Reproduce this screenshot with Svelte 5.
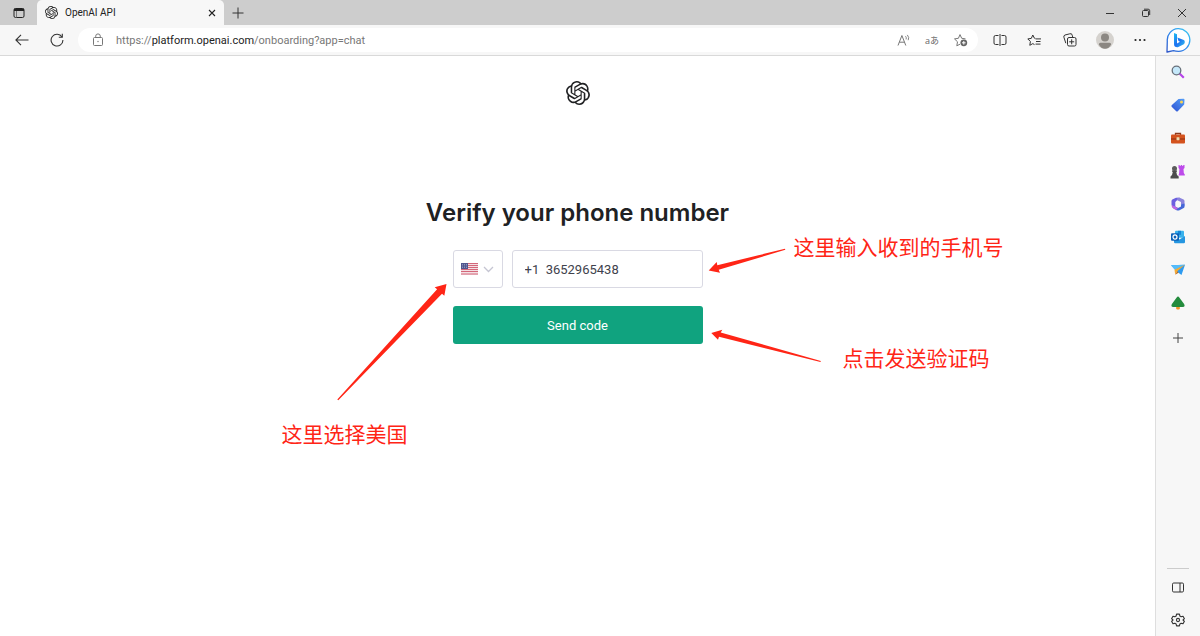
<script lang="ts">
  const logo =
    "M22.2819 9.8211a5.9847 5.9847 0 0 0-.5157-4.9108 6.0462 6.0462 0 0 0-6.5098-2.9A6.0651 6.0651 0 0 0 4.9807 4.1818a5.9847 5.9847 0 0 0-3.9977 2.9 6.0462 6.0462 0 0 0 .7427 7.0966 5.98 5.98 0 0 0 .511 4.9107 6.051 6.051 0 0 0 6.5146 2.9001A5.9847 5.9847 0 0 0 13.2599 24a6.0557 6.0557 0 0 0 5.7718-4.2058 5.9894 5.9894 0 0 0 3.9977-2.9001 6.0557 6.0557 0 0 0-.7475-7.0729zm-9.022 12.6081a4.4755 4.4755 0 0 1-2.8764-1.0408l.1419-.0804 4.7783-2.7582a.7948.7948 0 0 0 .3927-.6813v-6.7369l2.02 1.1686a.071.071 0 0 1 .038.052v5.5826a4.504 4.504 0 0 1-4.4945 4.4944zm-9.6607-4.1254a4.4708 4.4708 0 0 1-.5346-3.0137l.142.0852 4.783 2.7582a.7712.7712 0 0 0 .7806 0l5.8428-3.3685v2.3324a.0804.0804 0 0 1-.0332.0615L9.74 19.9502a4.4992 4.4992 0 0 1-6.1408-1.6464zM2.3408 7.8956a4.485 4.485 0 0 1 2.3655-1.9728V11.6a.7664.7664 0 0 0 .3879.6765l5.8144 3.3543-2.0201 1.1685a.0757.0757 0 0 1-.071 0l-4.8303-2.7865A4.504 4.504 0 0 1 2.3408 7.872zm16.5963 3.8558L13.1038 8.364 15.1192 7.2a.0757.0757 0 0 1 .071 0l4.8303 2.7913a4.4944 4.4944 0 0 1-.6765 8.1042v-5.6772a.79.79 0 0 0-.407-.667zm2.0107-3.0231l-.142-.0852-4.7735-2.7818a.7759.7759 0 0 0-.7854 0L9.409 9.2297V6.8974a.0662.0662 0 0 1 .0284-.0615l4.8303-2.7866a4.4992 4.4992 0 0 1 6.6802 4.66zM8.3065 12.863l-2.02-1.1638a.0804.0804 0 0 1-.038-.0567V6.0742a4.4992 4.4992 0 0 1 7.3757-3.4537l-.142.0805L8.704 5.459a.7948.7948 0 0 0-.3927.6813zm1.0976-2.3654l2.602-1.4998 2.6069 1.4998v2.9994l-2.5974 1.4997-2.6067-1.4997Z";

  let phone = "+1  3652965438";
  let country = "US";
</script>

<div class="browser">
  <header>
    <div class="titlebar">
      <button class="tab-menu" aria-label="Tab actions">
        <svg width="12" height="12" viewBox="0 0 12 12" fill="none" stroke="#222">
          <rect x="1" y="1.5" width="10" height="9" rx="1.5" />
          <path d="M1 2.8h10" stroke-width="2.4" />
          <path d="M3.5 4v6.5" stroke="#777" />
        </svg>
      </button>
      <div class="tab">
        <svg width="13" height="13" viewBox="0 0 24 24" fill="#222"><path d={logo} /></svg>
        <span class="tab-title">OpenAI API</span>
        <button class="tab-close" aria-label="Close tab">
          <svg width="8" height="8" viewBox="0 0 8 8" stroke="#222" stroke-width="1.1"><path d="M1 1l6 6M7 1L1 7" /></svg>
        </button>
      </div>
      <button class="new-tab" aria-label="New tab">
        <svg width="12" height="12" viewBox="0 0 12 12" stroke="#333"><path d="M6 .5v11M.5 6h11" /></svg>
      </button>
      <div class="window-controls">
        <button aria-label="Minimize">
          <svg width="10" height="10" viewBox="0 0 10 10" stroke="#333"><path d="M1 5.5h8" /></svg>
        </button>
        <button aria-label="Restore">
          <svg width="10" height="10" viewBox="0 0 10 10" fill="none" stroke="#333">
            <rect x="1.5" y="2.5" width="6" height="6" rx="1" />
            <path d="M3 1.2h4.2a1.5 1.5 0 0 1 1.5 1.5V7" />
          </svg>
        </button>
        <button aria-label="Close">
          <svg width="10" height="10" viewBox="0 0 10 10" stroke="#333"><path d="M1 1l8 8M9 1L1 9" /></svg>
        </button>
      </div>
    </div>

    <div class="toolbar">
      <button class="tool" aria-label="Back">
        <svg width="14" height="12" viewBox="0 0 14 12" fill="none" stroke="#333" stroke-width="1.1"><path d="M13.5 6H1M6 .8L.9 6 6 11.2" /></svg>
      </button>
      <button class="tool" aria-label="Refresh">
        <svg width="14" height="14" viewBox="0 0 14 14" fill="none" stroke="#333" stroke-width="1.1">
          <path d="M12 4A5.9 5.9 0 1 0 12.9 7" />
          <path d="M12.3 .8v3.5H8.8" />
        </svg>
      </button>
      <div class="address">
        <svg class="lock" width="12" height="14" viewBox="0 0 12 14" fill="none" stroke="#777">
          <rect x="1.5" y="4.5" width="9" height="8" rx="1" />
          <path d="M3.7 4.5V3.2a2.3 2.3 0 0 1 4.6 0v1.3" />
          <circle cx="6" cy="8.5" r=".7" fill="#777" stroke="none" />
        </svg>
        <span class="url">https://<b>platform.openai.com</b>/onboarding?app=chat</span>
        <button class="inner" aria-label="Read aloud">
          <svg width="14" height="13" viewBox="0 0 14 13" fill="none" stroke="#777">
            <path d="M1 11.5L4.9 1.5 8.8 11.5M2.3 8.2h5.2" />
            <path d="M8.5 2.2q1.3 1.5 .6 3.2M10.3 .9q2.3 2.5 .9 5.3" stroke-width=".9" />
          </svg>
        </button>
        <button class="inner translate" aria-label="Translate">aあ</button>
        <button class="inner" aria-label="Add to favorites">
          <svg width="15" height="14" viewBox="0 0 15 14" fill="none" stroke="#777">
            <path d="M7 11.2l-3.2 1.6.7-4L1.5 5.9l3.9-.6L7 1.6l1.7 3.7 3.8.6" stroke-linejoin="round" />
            <circle cx="10.8" cy="9.8" r="3.4" fill="#666" stroke="none" />
            <path d="M10.8 8v3.6M9 9.8h3.6" stroke="#fff" />
          </svg>
        </button>
      </div>
      <div class="tools">
        <button class="tool" aria-label="Split screen">
          <svg width="14" height="12" viewBox="0 0 14 12" fill="none" stroke="#333">
            <path d="M5.5 1.5H2.5a1.5 1.5 0 0 0-1.5 1.5v6a1.5 1.5 0 0 0 1.5 1.5h3M8.5 1.5h3A1.5 1.5 0 0 1 13 3v6a1.5 1.5 0 0 1-1.5 1.5h-3M7 0v12" />
          </svg>
        </button>
        <button class="tool" aria-label="Favorites">
          <svg width="15" height="13" viewBox="0 0 15 13" fill="none" stroke="#333" stroke-linejoin="round">
            <path d="M8.3 4.4L7.4 4.2 5.8 1 4.3 4.4.8 4.9l2.6 2.6-.6 3.8 3-1.7 1.7 1" />
            <path d="M8.5 4.9H14M9 7.5h4.5M8.5 10.1h5" />
          </svg>
        </button>
        <button class="tool" aria-label="Collections">
          <svg width="14" height="14" viewBox="0 0 14 14" fill="none" stroke="#333">
            <rect x="4.5" y="4.5" width="8.5" height="8.5" rx="1.5" />
            <path d="M8.7 6.3v5M6.2 8.8h5M2.8 10.2L.9 4.2A1.8 1.8 0 0 1 2 2L6.8.8A1.8 1.8 0 0 1 9.2 2.2l.6 2.3" />
          </svg>
        </button>
        <button class="tool" aria-label="Profile">
          <svg width="18" height="18" viewBox="0 0 18 18">
            <circle cx="9" cy="9" r="9" fill="#d5d2ce" />
            <circle cx="9" cy="6.6" r="4" fill="#8b8782" />
            <path d="M2.8 13.5q0-1.700 1.700-1.700h9q1.700 0 1.700 1.700-2.200 4.200-6.200 4.200t-6.200-4.200z" fill="#8b8782" />
          </svg>
        </button>
        <button class="tool" aria-label="Settings and more">
          <svg width="12" height="4" viewBox="0 0 12 4" fill="#222">
            <circle cx="1.5" cy="2" r="1.1" /><circle cx="6" cy="2" r="1.1" /><circle cx="10.5" cy="2" r="1.1" />
          </svg>
        </button>
      </div>
      <button class="bing" aria-label="Bing Chat">
        <svg width="25" height="25" viewBox="0 0 25 25" fill="none">
          <defs>
            <linearGradient id="ring" x1="0" y1="1" x2="1" y2="0">
              <stop offset="0" stop-color="#2d55c8" />
              <stop offset=".5" stop-color="#2f8cf0" />
              <stop offset="1" stop-color="#3bcdf0" />
            </linearGradient>
            <linearGradient id="bee" x1="0" y1="0" x2="1" y2="1">
              <stop offset="0" stop-color="#1fc0f2" />
              <stop offset=".5" stop-color="#1d6ff0" />
              <stop offset="1" stop-color="#31c6ee" />
            </linearGradient>
          </defs>
          <path d="M1 24L1.300 13A11.300 11.300 0 1 1 12.600 23.300Q9.600 23.300 7.500 22.600Z" fill="#fff" stroke="url(#ring)" stroke-width="1.3" stroke-linejoin="round" />
          <path d="M8 5l3 1.200v9.300l3-1.800-1.500-.8-1.200-3.500 6.500 2.500q1 .5 1 2t-1 2.300L11.800 19.300Q8 19.500 8 16z" fill="url(#bee)" />
        </svg>
      </button>
    </div>
  </header>

  <div class="body">
    <main>
      <svg class="logo" width="24" height="24" viewBox="0 0 24 24" fill="#202123"><path d={logo} /></svg>
      <h1>Verify your phone number</h1>
      <form on:submit|preventDefault>
        <div class="row">
          <div class="country">
            <svg width="17" height="12" viewBox="0 0 17 12">
              <rect width="17" height="12" fill="#f3dfe3" />
              <path d="M0 .5h17M0 2.500h17M0 4.500h17M0 6.500h17M0 8.500h17M0 11h17" stroke="#d4677a" />
              <rect width="7" height="6" fill="#50568f" />
              <path d="M1 1.500h5M1 3h5M1 4.500h5" stroke="#a5a9ca" stroke-width=".7" stroke-dasharray="1 1" />
            </svg>
            <svg width="11" height="7" viewBox="0 0 11 7" fill="none" stroke="#c5c5d2" stroke-width="1.3"><path d="M1 1l4.500 4.500L10 1" /></svg>
            <select aria-label="Country" bind:value={country}>
              <option value="US">US</option>
            </select>
          </div>
          <input type="tel" aria-label="Phone number" bind:value={phone} />
        </div>
        <button class="send" type="submit">Send code</button>

        <svg class="arrows" width="490" height="170" viewBox="337 240 490 170" fill="#ff2516" aria-hidden="true">
          <path d="M708.700 270.500L716.700 262l.6 3.200L785 248.800l.3 1-66.600 19.900 1.300 3z" />
          <path d="M711.300 333l11-3.300-1.600 2.700L820.800 361l-.3 1L719 336.700l-1 3z" />
          <path d="M446.500 284l-11.800 3.300 2.400 1.900L337.300 399.500l1 .8L442 293.700l2.300 2z" />
        </svg>
        <span class="note note-phone">这里输入收到的手机号</span>
        <span class="note note-send">点击发送验证码</span>
        <span class="note note-country">这里选择美国</span>
      </form>
    </main>

    <aside>
      <button aria-label="Search">
        <svg width="14" height="14" viewBox="0 0 14 14" fill="none">
          <path d="M8.500 8.500l4.300 4.300" stroke="#b544e8" stroke-width="2.2" />
          <circle cx="5.500" cy="5.500" r="4.300" fill="#c5e8fa" stroke="#68707a" stroke-width="1.3" />
        </svg>
      </button>
      <button aria-label="Shopping">
        <svg width="14" height="14" viewBox="0 0 14 14">
          <defs>
            <linearGradient id="tag" x1="1" y1="0" x2="0" y2="1">
              <stop offset="0" stop-color="#55a0f8" /><stop offset="1" stop-color="#2c50d2" />
            </linearGradient>
          </defs>
          <path d="M7.500 1L12.500 .7q1 0 1 1L13.200 6.500 7 13q-1 1-2 0L.9 9q-1-1 0-2z" fill="url(#tag)" />
          <circle cx="10.500" cy="4" r="1.500" fill="#f9d252" />
        </svg>
      </button>
      <button aria-label="Tools">
        <svg width="14" height="12" viewBox="0 0 14 12">
          <path d="M4.500 3V1.500h5V3" fill="none" stroke="#8a391c" stroke-width="1.3" />
          <rect y="2.500" width="14" height="9" rx="1" fill="#d4531e" />
          <path d="M0 6.500h14v1H0z" fill="#8f3112" />
          <rect x="5.500" y="5.200" width="3" height="3" rx=".6" fill="#eddcae" />
        </svg>
      </button>
      <button aria-label="Games">
        <svg width="15" height="15" viewBox="0 0 15 15">
          <path d="M8.500 1h1.200v1h1V1h1.500v1h1V1h1.300v3l-1 1 .3 4 1 1.500v1H8.500l.6-2 .3-4.500-.9-1z" fill="#bd4bea" />
          <circle cx="4.500" cy="4.500" r="2.500" fill="#5c5c5c" />
          <path d="M2 6.500h5v1L6.300 8l.7 3 1.700 1.500V14.500H.5v-2L2 11l.8-3L2 7.500z" fill="#4d4d4d" />
        </svg>
      </button>
      <button aria-label="Microsoft 365">
        <svg width="14" height="14" viewBox="0 0 14 14">
          <path d="M5 .7h4L6 3.200 4.300 5v5L1.200 9Q.5 8.500.5 7.500V4q0-1 .8-1.500z" fill="#6b5fe0" />
          <path d="M6.500 .7h2.300L12.600 2.600q.9.500.9 1.500v5.200L10 7.500V5L5.800 3.100z" fill="#8b83dc" />
          <path d="M13.500 6.500v3q0 1-.8 1.500L8.500 13.200q-1.500.7-3 0L1.200 10.500 4.300 9.500 7 11l3-1.500V7.500z" fill="#4568d8" />
          <path d="M1.200 8.300L4.300 9.700 7 11 5 13Q1 11.200 .6 9z" fill="#bf65e1" />
        </svg>
      </button>
      <button aria-label="Outlook">
        <svg width="14" height="14" viewBox="0 0 14 14">
          <rect x="4" y=".8" width="9" height="7" rx="1" fill="#38b2ec" />
          <path d="M7 .8h3v4H7z" fill="#1684d6" />
          <path d="M3 6l5.500 3.500L14 6v6q0 1.200-1.200 1.200H4.200Q3 13.200 3 12z" fill="#2596e0" />
          <rect y="3.200" width="8" height="7.600" rx="1" fill="#0c62b9" />
          <ellipse cx="4" cy="7" rx="2" ry="2.100" fill="none" stroke="#fff" stroke-width="1.2" />
        </svg>
      </button>
      <button aria-label="Drop">
        <svg width="14" height="12" viewBox="0 0 14 12">
          <path d="M0 1.200L14 .8 10.500 11 7 8.500z" fill="#2e9bf0" />
          <path d="M0 1.200L14 .8 4 6z" fill="#55bcfa" />
          <path d="M14 .8L3.500 5.800 4.200 10.500 6.500 7z" fill="#f5aa32" />
          <path d="M6.300 7.200L4.200 10.700l3.300-2z" fill="#ba681e" />
        </svg>
      </button>
      <button aria-label="Tree">
        <svg width="14" height="14" viewBox="0 0 14 14">
          <path d="M5.200 10h3.600v3q-1.800 1-3.600 0z" fill="#f39423" />
          <path d="M7 .5q.7 0 1.300 1l4.800 6.500q1.500 3-1.600 3h-9q-3.100 0-1.600-3L5.700 1.500Q6.300 .5 7 .5z" fill="#248c3d" />
        </svg>
      </button>
      <button class="customize" aria-label="Customize sidebar">
        <svg width="10" height="10" viewBox="0 0 10 10" stroke="#444"><path d="M5 0v10M0 5h10" /></svg>
      </button>
      <hr />
      <button aria-label="Hide sidebar">
        <svg width="12" height="11" viewBox="0 0 12 11" fill="none" stroke="#333">
          <rect x=".5" y="1" width="11" height="9" rx="1.200" /><path d="M8 1v9" />
        </svg>
      </button>
      <button aria-label="Settings">
        <svg width="14" height="14" viewBox="0 0 24 24" fill="none" stroke="#333" stroke-width="1.9" stroke-linejoin="round">
          <path d="M9.500 2h5l.7 3.200 2.200 1.300 3.200-1 2.400 4.200-2.400 2.300 2.400 2.300-2.400 4.200-3.200-1-2.200 1.300-.7 3.200h-5l-.7-3.200-2.200-1.300-3.200 1L1 14.300 3.400 12 1 9.700l2.400-4.200 3.200 1 2.200-1.300z" />
          <circle cx="12" cy="12" r="2.700" />
        </svg>
      </button>
    </aside>
  </div>
</div>

<style>
  :global(body) {
    margin: 0;
    background: #fff;
  }

  .browser {
    min-height: 100vh;
    display: flex;
    flex-direction: column;
    font-family: Roboto, "Noto Sans", sans-serif;
    color: #222;
  }

  button {
    display: flex;
    align-items: center;
    justify-content: center;
    padding: 0;
    border: none;
    background: none;
    cursor: pointer;
  }

  svg {
    flex: none;
  }

  .titlebar {
    display: flex;
    height: 25px;
    background: #cdcdcd;
  }

  .tab-menu {
    width: 37px;
  }

  .tab {
    display: flex;
    align-items: center;
    width: 187px;
    padding: 0 8px;
    box-sizing: border-box;
    background: #f7f7f7;
    border-radius: 5px 5px 0 0;
  }

  .tab-title {
    flex: 1;
    margin-left: 7px;
    font-size: 10px;
  }

  .tab-close,
  .new-tab {
    height: 25px;
  }

  .new-tab {
    width: 28px;
  }

  .window-controls {
    display: flex;
    margin-left: auto;
  }

  .window-controls button {
    width: 36px;
  }

  .toolbar {
    display: flex;
    align-items: center;
    height: 30px;
    padding-left: 4px;
    background: #f7f7f7;
    border-bottom: 1px solid #d9d9d9;
  }

  .tool {
    width: 35px;
    height: 30px;
  }

  .tools {
    display: flex;
  }

  .address {
    flex: 1;
    display: flex;
    align-items: center;
    height: 24px;
    margin: 0 4px;
    padding: 0 4px 0 14px;
    background: #fff;
    border-radius: 12px;
  }

  .url {
    flex: 1;
    margin-left: 12px;
    font-size: 11px;
    color: #777;
  }

  .url b {
    font-weight: 400;
    color: #222;
  }

  .inner {
    width: 28px;
    height: 24px;
  }

  .translate {
    font-family: "Open Sans", "Noto Sans CJK JP", sans-serif;
    font-size: 9px;
    color: #666;
  }

  .bing {
    width: 43px;
    height: 30px;
  }

  .body {
    flex: 1;
    display: flex;
  }

  main {
    flex: 1;
    display: flex;
    flex-direction: column;
    align-items: center;
    padding-top: 25px;
  }

  h1 {
    margin: 92px 0 21px;
    font-family: Inter, sans-serif;
    font-size: 24px;
    font-weight: 600;
    line-height: 32px;
    color: #202123;
  }

  form {
    position: relative;
    display: flex;
    flex-direction: column;
    gap: 18px;
    width: 250px;
  }

  .row {
    display: flex;
    gap: 9px;
  }

  .country {
    position: relative;
    display: flex;
    align-items: center;
    justify-content: center;
    gap: 5px;
    width: 50px;
    height: 38px;
    box-sizing: border-box;
    border: 1px solid #d9d9e3;
    border-radius: 3px;
  }

  .country select {
    position: absolute;
    inset: 0;
    width: 100%;
    opacity: 0;
    cursor: pointer;
  }

  input {
    flex: 1;
    min-width: 0;
    height: 38px;
    box-sizing: border-box;
    padding: 0 12px;
    border: 1px solid #d9d9e3;
    border-radius: 3px;
    font-family: Roboto, sans-serif;
    font-size: 13px;
    color: #40424c;
  }

  .send {
    height: 38px;
    border-radius: 3px;
    background: #10a37f;
    font-family: Roboto, sans-serif;
    font-size: 13px;
    color: #fff;
  }

  .arrows {
    position: absolute;
    left: -116px;
    top: -10px;
    pointer-events: none;
  }

  .note {
    position: absolute;
    font-family: "Noto Sans CJK SC", sans-serif;
    font-size: 21px;
    line-height: 30px;
    white-space: nowrap;
    color: #ff2516;
  }

  .note-phone {
    left: 341px;
    top: -19px;
  }

  .note-send {
    left: 390px;
    top: 92px;
  }

  .note-country {
    left: -171px;
    top: 168px;
  }

  aside {
    display: flex;
    flex-direction: column;
    gap: 1px;
    width: 43px;
    padding-right: 1px;
    box-sizing: content-box;
    background: #f7f7f7;
    border-left: 1px solid #dedede;
  }

  aside button {
    height: 32px;
  }

  aside .customize {
    margin-top: 2px;
  }

  hr {
    width: 22px;
    height: 1px;
    margin: auto auto 1px;
    border: none;
    background: #ccc;
  }
</style>
